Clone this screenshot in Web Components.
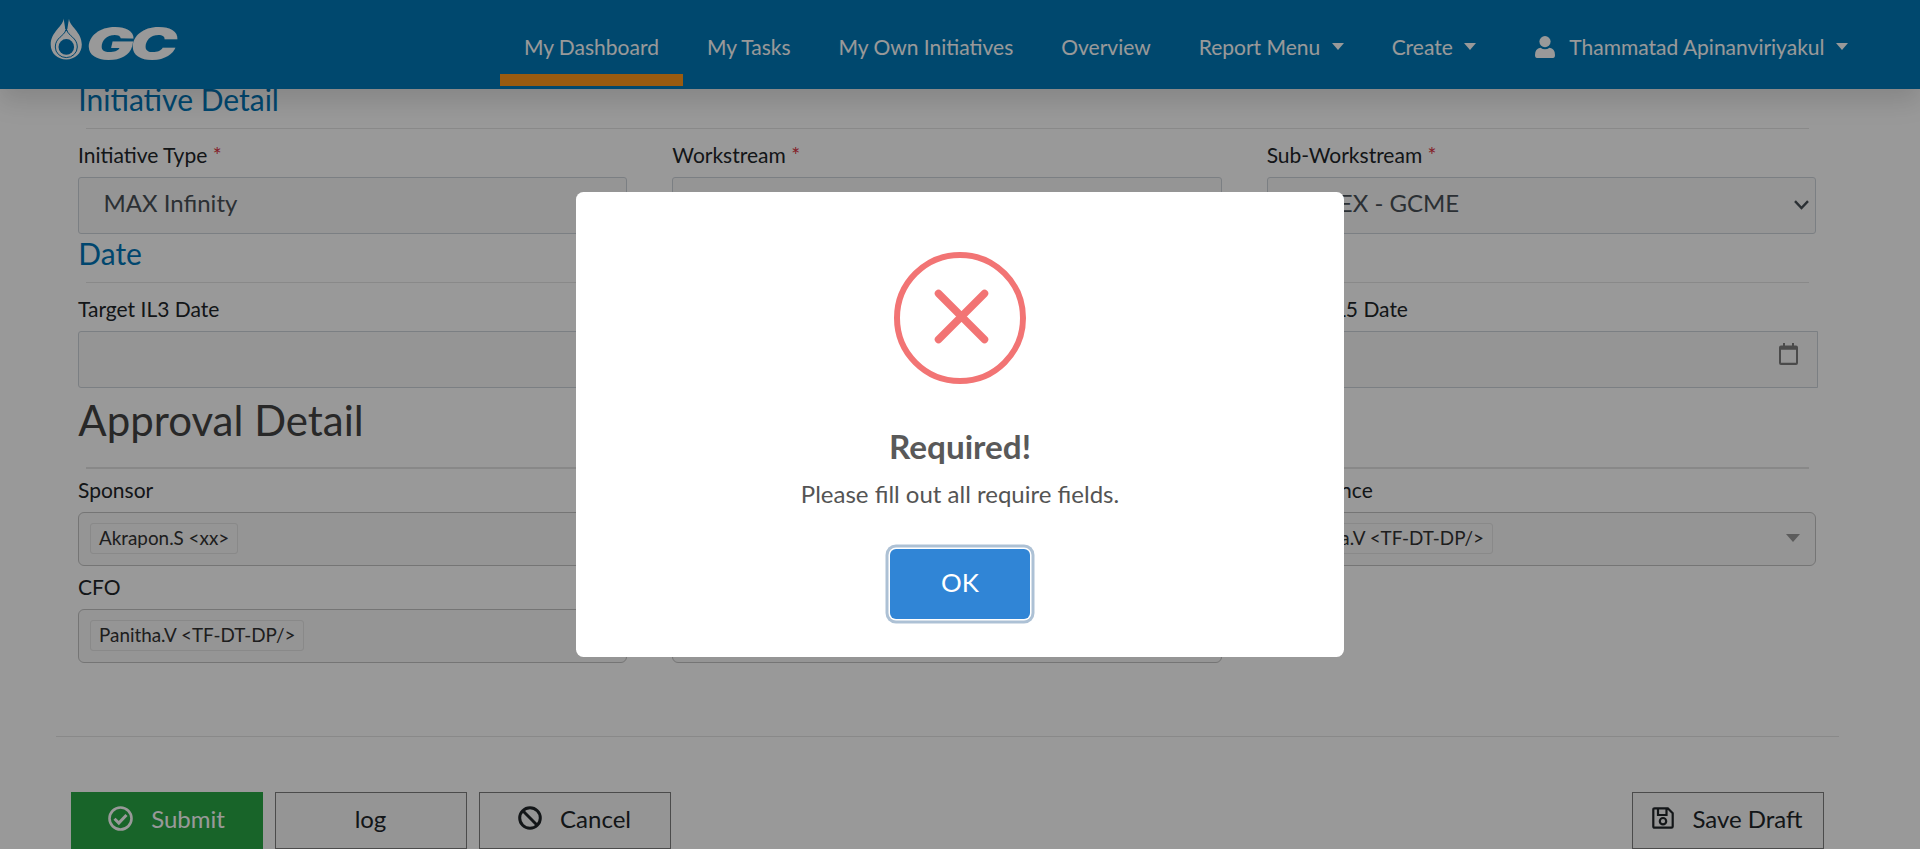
<!DOCTYPE html>
<html lang="en">
<head>
<meta charset="utf-8">
<title>Initiative</title>
<style>
  html, body { margin: 0; height: 100%; overflow: hidden; background: #fff; }
  body { font-family: Lato, "Open Sans", sans-serif; font-size: 21px; color: #212529; }
</style>
</head>
<body>
<initiative-app></initiative-app>
<script>
function define(name, html) {
  const tpl = document.createElement('template');
  tpl.innerHTML = html;
  customElements.define(name, class extends HTMLElement {
    constructor() {
      super();
      this.attachShadow({ mode: 'open' }).append(tpl.content.cloneNode(true));
    }
  });
}

define('gc-logo', `
<style>
  :host { display: block; width: 130px; height: 45px; }
  svg { display: block; overflow: visible; }
  text { font: italic 900 46px Inter, "Liberation Sans", sans-serif; }
</style>
<svg width="130" height="45" viewBox="0 0 130 45" fill="#fff">
  <path d="M13.600 1.600 C13.600 9 .7 15 .7 27.500 C.7 36.500 7.500 42.400 16.300 42.400 C25 42.400 31.800 36.500 31.800 27.500 C31.800 15 19 9 19 1.600 L17.300 12 H15.300 Z"/>
  <path d="M16.300 8 V14" fill="none" stroke="#0076b8" stroke-width="1.500"/>
  <path d="M15.800 13 C14.500 19 5.300 20.500 5.300 30 A11 10.600 0 0 0 27.300 30 C27.300 20.500 18.100 19 16.800 13" fill="none" stroke="#0076b8" stroke-width="1"/>
  <circle cx="16.300" cy="29.900" r="7.800" fill="#0076b8"/>
  <text x="0" y="0" transform="translate(36 43) scale(1.300 1)" textLength="37" lengthAdjust="spacingAndGlyphs">G</text>
  <text x="0" y="0" transform="translate(80 43) scale(1.300 1)" textLength="36.500" lengthAdjust="spacingAndGlyphs">C</text>
</svg>`);

define('nav-item', `
<style>
  :host { display: flex; align-items: center; box-sizing: border-box; height: 54px; padding: 0 24px 12px;
          border-bottom: 12px solid transparent; line-height: 30px; white-space: nowrap; color: #fff; }
  :host([active]) { border-bottom-color: #ff981c; }
  i { display: none; margin-left: 11.500px; margin-top: -2px; border: 6.500px solid transparent; border-top: 7px solid #fff; border-bottom: 0; }
  :host([menu]) i { display: block; }
</style>
<slot></slot><i></i>`);

define('app-navbar', `
<style>
  :host { display: flex; justify-content: space-between; align-items: flex-end; box-sizing: border-box; height: 89px;
          padding: 0 48px 3px 50px; background: #0079b8; box-shadow: 0 12px 24px rgba(0,0,0,.13); position: relative; z-index: 1; }
  gc-logo { align-self: flex-start; margin-top: 16.700px; }
  nav { display: flex; }
  .user { padding-left: 35px; }
  svg { margin: 0 14px 0 0; }
</style>
<gc-logo></gc-logo>
<nav>
  <nav-item active>My Dashboard</nav-item>
  <nav-item>My Tasks</nav-item>
  <nav-item>My Own Initiatives</nav-item>
  <nav-item>Overview</nav-item>
  <nav-item menu>Report Menu</nav-item>
  <nav-item menu>Create</nav-item>
  <nav-item menu class="user"><svg width="20" height="22" viewBox="0 0 20 22" fill="#fff"><circle cx="10" cy="5.600" r="5.600"/><path d="M5.500 11.800 Q10 14.800 14.500 11.800 Q20 12.500 20 19 Q20 22 18 22 H2 Q0 22 0 19 Q0 12.500 5.500 11.800 Z"/></svg>Thammatad Apinanviriyakul</nav-item>
</nav>`);

define('form-section', `
<style>
  :host { display: block; margin-bottom: 3px; }
  h2 { margin: 0 22.300px; font-size: 30px; line-height: 33px; height: 34px; font-weight: 400; color: #0076b8; }
  hr { margin: 11px 30px 10px; border: 0; height: 1px; background: #e5e5e5; }
  .cols { display: grid; grid-template-columns: repeat(3, 1fr); row-gap: 5px; }
  :host([large]) { margin: 7px 0 0; }
  :host([large]) h2 { font-size: 42px; line-height: 50px; height: 50px; color: #444; }
  :host([large]) hr { margin: 22px 30px 5px; height: 1.500px; padding-bottom: .5px; background: #e3e3e3; }
</style>
<h2><slot name="title"></slot></h2>
<hr>
<div class="cols"><slot></slot></div>`);

define('form-field', `
<style>
  :host { display: block; padding: 0 23px 0 22px; }
  .label { height: 32px; line-height: 32px; margin-bottom: 6px; white-space: nowrap; }
  .label ::slotted(b) { font-weight: 400; color: #dc3545; }
  .box { display: flex; align-items: center; box-sizing: border-box; height: 57px; padding: 0 6px 6px 24.500px;
         border: 1px solid #ced4da; border-radius: 3px; background: #f8f8f8; font-size: 24px; color: #495057; }
  :host([wide]) { padding-right: 20.500px; }
  :host([wide]) .box { border-radius: 3px 0 0 3px; padding-right: 19px; }
  .text { flex: 1; }
</style>
<div class="label"><slot name="label"></slot></div>
<div class="box"><span class="text"><slot></slot></span><slot name="icon"></slot></div>`);

define('tag-select', `
<style>
  :host { display: block; padding: 0 23px 0 22px; }
  .label { height: 32px; line-height: 32px; margin-bottom: 6px; white-space: nowrap; }
  .box { display: flex; justify-content: space-between; align-items: flex-start; box-sizing: border-box; height: 54px; padding: 10px 15px 0 11px;
         border: 1px solid #c4c4c4; border-radius: 6px; background: #f8f8f8; }
  .chip { box-sizing: border-box; height: 31px; line-height: 27px; padding: 0 8px; border: 1px solid #e4e4e4; border-radius: 3px;
          font-size: 18.850px; color: #333; white-space: nowrap; }
  i { margin-top: 11px; border: 7.500px solid transparent; border-top: 8px solid #999; border-bottom: 0; }
</style>
<div class="label"><slot name="label"></slot></div>
<div class="box"><span class="chip"><slot></slot></span><i></i></div>`);

define('app-button', `
<style>
  :host { display: flex; align-items: center; justify-content: center; gap: 18px; box-sizing: border-box; width: 192px; height: 57px;
          padding: 0 1px 5px 0; border: 1px solid #7e7e7e; background: #f8f8f8; font-size: 24px; white-space: nowrap; }
  :host([primary]) { background: #28a745; border-color: #28a745; color: #fff; }
</style>
<slot name="icon"></slot><span><slot></slot></span>`);

define('action-bar', `
<style>
  :host { display: flex; gap: 12px; padding: 0 15px; }
  .push { margin-left: auto; }
</style>
<app-button primary><svg slot="icon" width="25" height="25" viewBox="0 0 25 25" fill="none" stroke="#fff" stroke-width="2.600"><circle cx="12.500" cy="12.500" r="11"/><path d="M6.500 12.800 L10.800 17 L18.500 9" stroke-width="3"/></svg>Submit</app-button>
<app-button>log</app-button>
<app-button><svg slot="icon" width="24" height="24" viewBox="0 0 24 24" fill="none" stroke="#212529" stroke-width="3"><circle cx="12" cy="12" r="10.300"/><path d="M4.800 4.800 L19.200 19.200"/></svg>Cancel</app-button>
<app-button class="push"><svg slot="icon" width="22" height="22" viewBox="0 0 22 22" fill="none" stroke="#212529" stroke-width="2.200"><path d="M2.600 1.300 H15.800 L20.700 6.200 V19.400 Q20.700 20.700 19.400 20.700 H2.600 Q1.300 20.700 1.300 19.400 V2.600 Q1.300 1.300 2.600 1.300 Z M6 1.500 V8 H14.500 V1.500"/><circle cx="11" cy="14.200" r="3.200"/></svg>Save Draft</app-button>`);

define('alert-dialog', `
<style>
  :host { position: fixed; inset: 0; z-index: 10; display: flex; align-items: center; justify-content: center; background: rgba(0,0,0,.4); }
  .popup { display: flex; flex-direction: column; align-items: center; box-sizing: border-box; width: 768px; height: 465px;
           padding-top: 60px; border-radius: 7.500px; background: #fff; color: #545454; }
  .title { margin: 42px 0 10px; font-size: 33.300px; line-height: 40px; font-weight: 700; color: #595959; }
  .text { font-size: 24px; line-height: 36px; margin-bottom: 37px; }
  button { box-sizing: border-box; width: 140px; height: 70px; padding: 0 0 5px; border: 0; border-radius: 6px; background: #3085d6;
           font: 25.900px Lato, sans-serif; color: #fff; box-shadow: 0 0 0 1.500px #fff, 0 0 0 4.500px #adc1d5; }
</style>
<div class="popup">
  <svg width="132" height="132" viewBox="0 0 132 132" fill="none" stroke="#f27474"><circle cx="66" cy="66" r="63" stroke-width="6"/><path d="M44.500 41.500 L90.500 87.500 M90.500 41.500 L44.500 87.500" stroke-width="7.500" stroke-linecap="round"/></svg>
  <div class="title"><slot name="title"></slot></div>
  <div class="text"><slot></slot></div>
  <button>OK</button>
</div>`);

define('initiative-app', `
<style>
  :host { display: block; height: 849px; overflow: hidden; }
  main { width: 1783px; margin: -6px 0 0 56px; }
  .end { margin: 73px 0 55px; border: 0; height: 1px; background: #e5e5e5; }
</style>
<app-navbar></app-navbar>
<main>
  <form-section>
    <span slot="title">Initiative Detail</span>
    <form-field><span slot="label">Initiative Type </span><b slot="label">*</b>MAX Infinity</form-field>
    <form-field><span slot="label">Workstream </span><b slot="label">*</b></form-field>
    <form-field><span slot="label">Sub-Workstream </span><b slot="label">*</b>CAPEX - GCME<svg slot="icon" width="15" height="10" viewBox="0 0 15 10" fill="none" stroke="#495057" stroke-width="2.400" style="margin-top:5px"><path d="M1 1.200 L7.500 8 L14 1.200"/></svg></form-field>
  </form-section>
  <form-section>
    <span slot="title">Date</span>
    <form-field><span slot="label">Target IL3 Date</span></form-field>
    <form-field><span slot="label">Target IL4 Date</span></form-field>
    <form-field wide><span slot="label">Target IL5 Date</span><svg slot="icon" width="19" height="22" viewBox="0 0 19 22" fill="#7e7e7e" style="margin-bottom:5px"><path fill-rule="evenodd" d="M2 2.500 H4 V0 H6 V2.500 H13 V0 H15 V2.500 H17 Q19 2.500 19 4.500 V20 Q19 22 17 22 H2 Q0 22 0 20 V4.500 Q0 2.500 2 2.500 Z M2 6.800 V19.800 H17 V6.800 Z"/></svg></form-field>
  </form-section>
  <form-section large>
    <span slot="title">Approval Detail</span>
    <tag-select><span slot="label">Sponsor</span>Akrapon.S &lt;xx&gt;</tag-select>
    <tag-select><span slot="label">Approver</span>Akrapon.S &lt;xx&gt;</tag-select>
    <tag-select><span slot="label">BU Finance</span>Panitha.V &lt;TF-DT-DP/&gt;</tag-select>
    <tag-select><span slot="label">CFO</span>Panitha.V &lt;TF-DT-DP/&gt;</tag-select>
    <tag-select><span slot="label">TO</span>Akrapon.S &lt;xx&gt;</tag-select>
  </form-section>
  <hr class="end">
  <action-bar></action-bar>
</main>
<alert-dialog><span slot="title">Required!</span>Please fill out all require fields.</alert-dialog>`);
</script>
</body>
</html>
